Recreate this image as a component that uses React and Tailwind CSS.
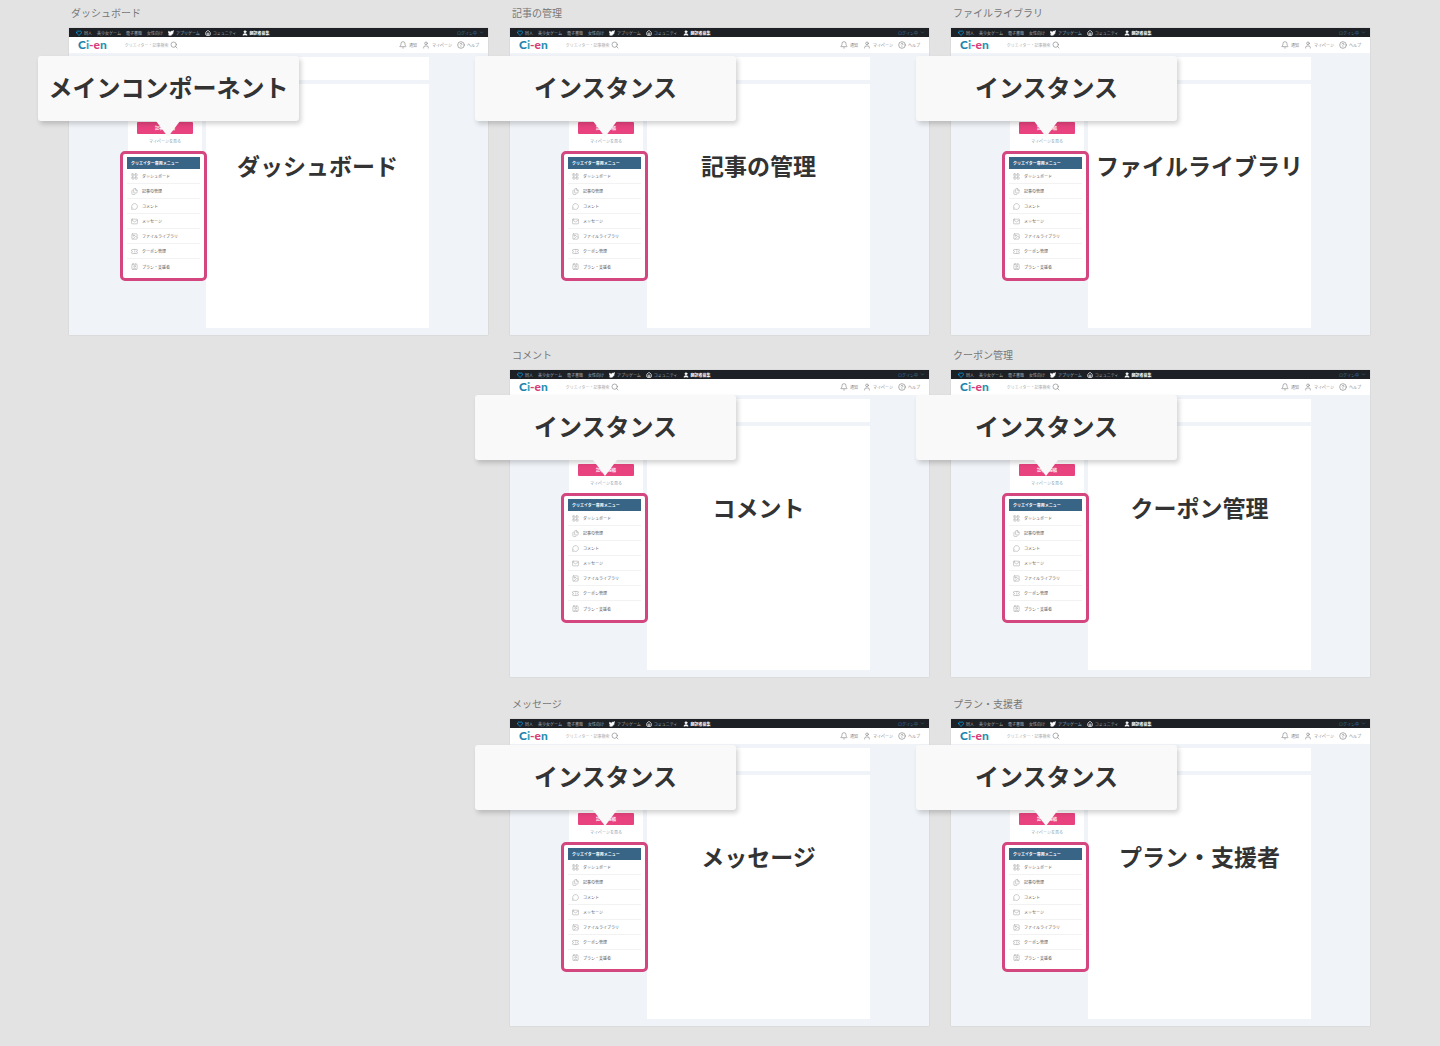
import { Bell, ChevronDown, CircleHelp, Contact, Files, Heart, Image, LayoutGrid, Mail, MessageCircle, Search, Ticket, User, Twitter, House } from "lucide-react"

const MENU = [
  { label: "ダッシュボード", icon: LayoutGrid },
  { label: "記事の管理", icon: Files },
  { label: "コメント", icon: MessageCircle },
  { label: "メッセージ", icon: Mail },
  { label: "ファイルライブラリ", icon: Image },
  { label: "クーポン管理", icon: Ticket },
  { label: "プラン・支援者", icon: Contact },
]

const SERVICES = [
  { label: "同人", icon: Heart, iconClass: "text-sky-500" },
  { label: "美少女ゲーム" },
  { label: "電子書籍" },
  { label: "女性向け" },
  { label: "アプリゲーム", icon: Twitter, iconClass: "fill-white text-white" },
  { label: "コミュニティ", icon: House, iconClass: "text-white" },
  { label: "翻訳者募集", icon: User, iconClass: "fill-white text-white", bold: true },
]

function TopBar() {
  return (
    <nav className="flex h-[9px] items-center bg-[#1d2126] pl-[7px] pr-1 text-[4px] leading-none text-[#a9b0b6]">
      <ul className="flex items-center gap-[5px]">
        {SERVICES.map(({ label, icon: Icon, iconClass, bold }) => (
          <li key={label}>
            <a href="#" className={`flex items-center gap-[2px] ${bold ? "font-bold text-white" : ""}`}>
              {Icon && <Icon className={`h-[6px] w-[6px] ${iconClass}`} strokeWidth={3} />}
              {label}
            </a>
          </li>
        ))}
      </ul>
      <a href="#" className="ml-auto flex items-center gap-[2px] text-[#3f7fa8]">
        ログイン中
        <ChevronDown className="h-[5px] w-[5px]" />
      </a>
    </nav>
  )
}

function SiteHeader() {
  return (
    <header className="flex h-4 items-center bg-white px-[9px] text-[4px] leading-none text-[#888]">
      <a href="#" className="font-['Lato'] text-[12px] font-black text-[#1b83ae]">
        C<span className="text-[#35a5bf]">i</span>
        <span className="text-[#d63f7c]">-e</span>
        <span className="text-[#1f93b3]">n</span>
      </a>
      <label className="ml-[18px] flex items-center">
        <input
          type="text"
          aria-label="検索"
          placeholder="クリエイター・記事検索"
          className="w-[45px] bg-transparent placeholder:text-[#aaa]"
        />
        <Search className="h-[8px] w-[8px]" />
      </label>
      <div className="ml-auto flex items-center gap-[5px]">
        <a href="#" className="flex items-center gap-[2px]"><Bell className="h-[8px] w-[8px]" />通知</a>
        <a href="#" className="flex items-center gap-[2px]"><User className="h-[8px] w-[8px]" />マイページ</a>
        <a href="#" className="flex items-center gap-[2px]"><CircleHelp className="h-[8px] w-[8px]" />ヘルプ</a>
      </div>
    </header>
  )
}

function CreatorMenu() {
  return (
    <nav className="relative -ml-2 -mr-[5px] h-[130px] rounded-[5px] border-[3px] border-[#d4467f] bg-white px-1 py-[3px]">
      <h3 className="flex h-[12px] items-center bg-[#386486] px-1 text-[4px] font-bold leading-none text-white">
        クリエイター専用メニュー
      </h3>
      <ul>
        {MENU.map(({ label, icon: Icon }) => (
          <li key={label} className="h-[15px] border-b border-[#f2f2f2] last:border-b-0">
            <a href="#" className="flex h-full items-center gap-1 px-1 text-[4px] leading-none text-[#555]">
              <Icon className="h-[7px] w-[7px] text-[#aaa]" />
              {label}
            </a>
          </li>
        ))}
      </ul>
    </nav>
  )
}

function Callout({ text, className }) {
  return (
    <div className={`absolute z-10 flex h-[65px] w-[261px] items-center justify-center rounded-[3px] bg-[#f9f9f9] pb-1 text-[24px] font-bold shadow-[2px_3px_5px_rgba(0,0,0,0.18)] ${className}`}>
      {text}
      <svg viewBox="0 0 24 16" className="absolute left-[118px] top-full h-4 w-6" fill="#f9f9f9">
        <path d="M0 0H24L12 16Z" />
      </svg>
    </div>
  )
}

function Artboard({ title, callout = "インスタンス", calloutClass = "-left-[35px] top-[28px]" }) {
  return (
    <section>
      <h2 className="flex h-[28px] items-center pb-[2px] pl-[2px] text-[10px] leading-none text-[#777]">
        {title}
      </h2>
      <div className="relative h-[307px] bg-[#f0f4f8] shadow-[0_0_1px_rgba(0,0,0,0.2)]">
        <TopBar />
        <SiteHeader />
        <div className="mx-[59px] mt-1 h-[23px] bg-white" />
        <div className="mx-[59px] mt-1 flex gap-1">
          <aside className="w-[74px]">
            <div className="flex h-[67px] flex-col items-center justify-end bg-white pb-2">
              <button className="h-[12px] w-[56px] rounded-[1px] bg-[#e8437f] text-[4px] font-bold leading-none text-white">
                記事を投稿
              </button>
              <a href="#" className="mt-[5px] text-[4px] leading-none text-[#7fa0b4]">マイページを見る</a>
            </div>
            <CreatorMenu />
          </aside>
          <main className="h-[244px] flex-1 bg-white pt-[65px] text-center text-[23px] font-bold leading-8">
            {title}
          </main>
        </div>
        <Callout text={callout} className={calloutClass} />
      </div>
    </section>
  )
}

export default function App() {
  return (
    <div className="min-h-screen bg-[#e3e3e3] pb-[19px] pl-[69px] pr-[70px] font-['Noto_Sans_CJK_JP',sans-serif] text-[#333]">
      <div className="grid grid-cols-3 gap-x-[22px]">
        <Artboard title="ダッシュボード" callout="メインコンポーネント" calloutClass="-left-[31px] top-[28px]" />
        <Artboard title="記事の管理" />
        <Artboard title="ファイルライブラリ" />
      </div>
      <div className="mt-[7px] grid grid-cols-3 gap-x-[22px]">
        <div className="col-start-2">
          <Artboard title="コメント" calloutClass="-left-[35px] top-[25px]" />
        </div>
        <Artboard title="クーポン管理" calloutClass="-left-[35px] top-[25px]" />
      </div>
      <div className="mt-[14px] grid grid-cols-3 gap-x-[22px]">
        <div className="col-start-2">
          <Artboard title="メッセージ" calloutClass="-left-[35px] top-[26px]" />
        </div>
        <Artboard title="プラン・支援者" calloutClass="-left-[35px] top-[26px]" />
      </div>
    </div>
  )
}
